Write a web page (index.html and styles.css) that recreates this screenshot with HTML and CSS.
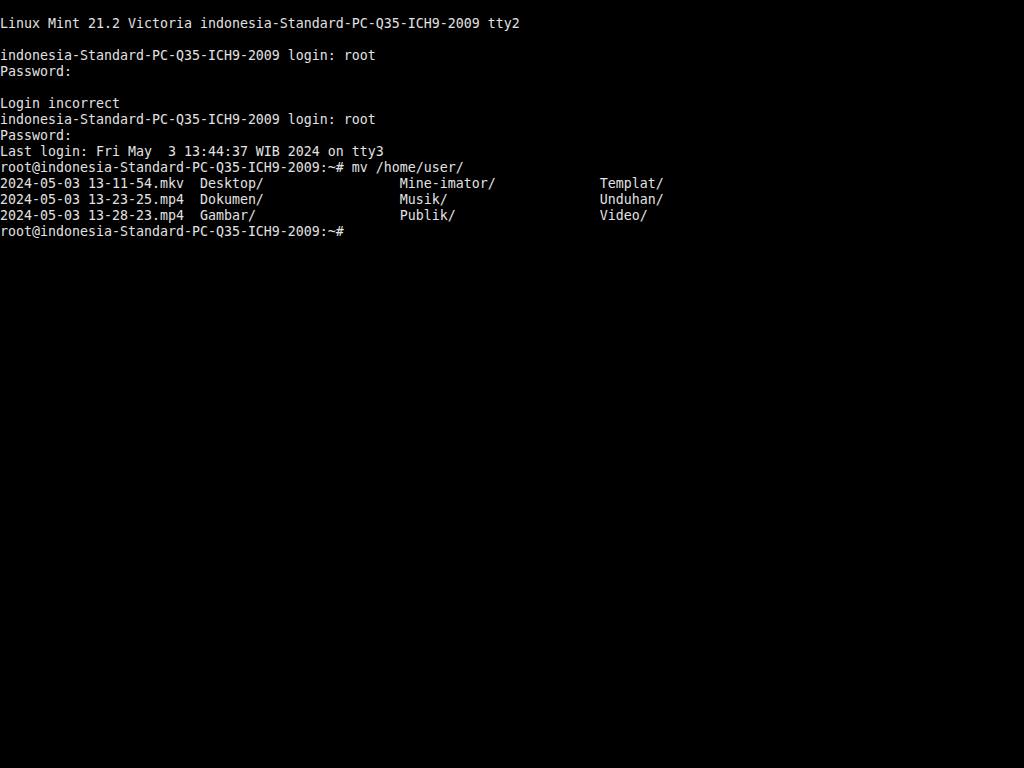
FILE: index.html
```html
<!DOCTYPE html>
<html lang="en">
<head>
    <meta charset="UTF-8">
    <title>tty2</title>
    <link rel="stylesheet" href="styles.css">
</head>
<body>
<div class="console">
<div class="line"> </div>
<div class="line">Linux Mint 21.2 Victoria indonesia-Standard-PC-Q35-ICH9-2009 tty2</div>
<div class="line"> </div>
<div class="line">indonesia-Standard-PC-Q35-ICH9-2009 login: root</div>
<div class="line">Password:</div>
<div class="line"> </div>
<div class="line">Login incorrect</div>
<div class="line">indonesia-Standard-PC-Q35-ICH9-2009 login: root</div>
<div class="line">Password:</div>
<div class="line">Last login: Fri May  3 13:44:37 WIB 2024 on tty3</div>
<div class="line">root@indonesia-Standard-PC-Q35-ICH9-2009:~# mv /home/user/</div>
<div class="line">2024-05-03 13-11-54.mkv  Desktop/                 Mine-imator/             Templat/</div>
<div class="line">2024-05-03 13-23-25.mp4  Dokumen/                 Musik/                   Unduhan/</div>
<div class="line">2024-05-03 13-28-23.mp4  Gambar/                  Publik/                  Video/</div>
<div class="line">root@indonesia-Standard-PC-Q35-ICH9-2009:~#</div>
</div>
</body>
</html>
```

FILE: styles.css
```css
html, body {
    margin: 0;
    padding: 0;
    background: #000;
    height: 100%;
}

body {
    overflow: hidden;
}

.console {
    color: #e2e2e2;
    font-family: "DejaVu Sans Mono", "Liberation Mono", monospace;
    font-size: 13.29px;
    line-height: 16px;
}

.line {
    height: 16px;
    white-space: pre;
}
```
